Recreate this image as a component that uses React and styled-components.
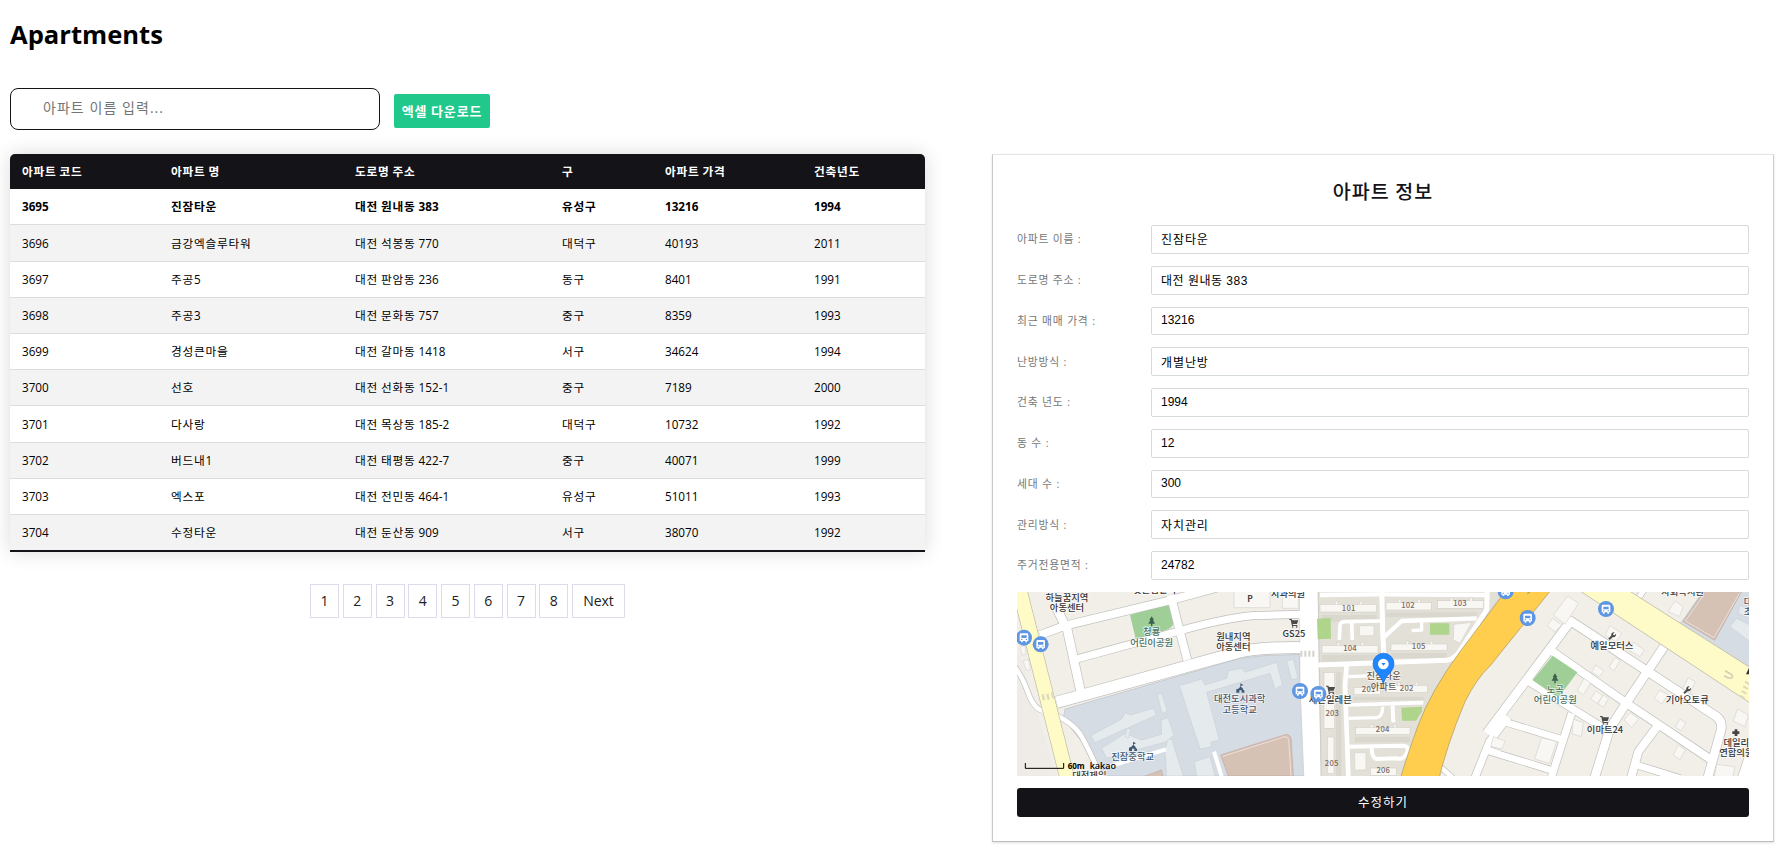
import React from "react";
import styled, { createGlobalStyle } from "styled-components";

const INK = "#141318";

const GlobalStyle = createGlobalStyle`
  * { box-sizing: border-box; }
  html, body { margin: 0; background: #fff; }
  body {
    font-family: "Open Sans", "Noto Sans CJK KR", sans-serif;
    color: #000;
    overflow: hidden;
  }
`;

const Page = styled.main`
  display: grid;
  grid-template-columns: 915px 782px;
  column-gap: 67px;
  padding: 0 0 16px 10px;
  width: 1790px;
  height: 859px;
  align-items: start;
  align-content: start;
`;

const Header = styled.header`
  grid-column: 1 / -1;
  height: 154px;
`;

const Title = styled.h1`
  margin: 0;
  padding-top: 17px;
  height: 88px;
  font-size: 25.6px;
  line-height: 36px;
  font-weight: 700;
`;

const Toolbar = styled.div`
  display: flex;
  align-items: flex-start;
  gap: 14px;
`;

const SearchInput = styled.input`
  width: 370px;
  height: 42px;
  padding: 0 32px 3px;
  border: 1px solid ${INK};
  border-radius: 8px;
  outline: none;
  font: 14px "Open Sans", "Noto Sans CJK KR", sans-serif;
  letter-spacing: 1.05px;
  &::placeholder { color: #757575; opacity: 1; }
`;

const ExcelButton = styled.button`
  margin-top: 6px;
  width: 96px;
  height: 34px;
  padding: 0 0 1px;
  border: 0;
  border-radius: 2px;
  background: #20c98b;
  color: #fff;
  font: 700 13px "Noto Sans CJK KR", sans-serif;
  letter-spacing: 0.8px;
  white-space: nowrap;
`;

const Table = styled.table`
  width: 915px;
  table-layout: fixed;
  border-collapse: separate;
  border-spacing: 0;
  border-radius: 5px 5px 0 0;
  overflow: hidden;
  box-shadow: 0 0 20px rgba(0, 0, 0, 0.15);
  font-size: 11.7px;
`;

const HeadRow = styled.tr`
  height: 35px;
  background: ${INK};
  color: #fff;
`;

const BodyRow = styled.tr`
  height: ${(p) => (p.$tall ? 37 : 36)}px;
  background: ${(p) => (p.$striped ? "#f3f3f3" : "#fff")};
  font-weight: ${(p) => (p.$active ? 700 : 400)};
  td { border-bottom: 1px solid #ddd; }
  &:last-of-type td { border-bottom: 2px solid ${INK}; }
`;

const Th = styled.th`
  padding: 0 0 1px 12px;
  width: ${(p) => p.$width}px;
  text-align: left;
  font-weight: 700;
  line-height: 16px;
  white-space: nowrap;
`;

const Td = styled.td`
  padding: 0 0 1px 12px;
  line-height: 16px;
  white-space: nowrap;
`;

const Hangul = styled.span`
  letter-spacing: 0.75px;
`;

const Pagination = styled.nav`
  display: flex;
  justify-content: center;
  gap: 3.75px;
  margin: 32px 0 0 0;
`;

const PageButton = styled.button`
  height: 34px;
  width: ${(p) => (p.$wide ? 53 : 29)}px;
  padding: 0 0 1px;
  border: 1px solid #dcdcec;
  background: #fff;
  color: #212121;
  font: 14px "Open Sans", sans-serif;
`;

const Card = styled.section`
  height: 688px;
  padding: 0 24px;
  border: 1px solid;
  border-color: #e4e4e4 #cdcdcd #bdbdbd #c8c8c8;
  box-shadow: 0 1px 2px rgba(0, 0, 0, 0.12);
`;

const CardTitle = styled.h2`
  margin: 0;
  height: 70px;
  padding-top: 22px;
  text-align: center;
  color: ${INK};
  font: 500 19.5px/27px "Noto Sans CJK KR", sans-serif;
  letter-spacing: 1.1px;
`;

const Field = styled.label`
  display: grid;
  grid-template-columns: 134px 1fr;
  align-items: center;
  height: 28.75px;
  margin-bottom: 12px;
`;

const FieldLabel = styled.span`
  color: #777;
  font-size: 10.8px;
  letter-spacing: 0.8px;
  line-height: 16px;
`;

const FieldInput = styled.input`
  width: 100%;
  height: 100%;
  padding: 0 9px 1px;
  border: 1px solid #d5dada;
  border-radius: 2px;
  outline: none;
  color: #000;
  font: 12px "Liberation Sans", "Noto Sans CJK KR", sans-serif;
  letter-spacing: ${(p) => p.$spacing}px;
`;

const MapView = styled.svg`
  display: block;
  width: 732px;
  height: 184px;
  overflow: hidden;
  font-family: "Noto Sans CJK KR", sans-serif;
`;

const SubmitButton = styled.button`
  display: block;
  width: 100%;
  height: 29px;
  margin-top: 12px;
  padding: 0 0 1px;
  border: 0;
  border-radius: 3px;
  background: ${INK};
  color: #fff;
  font: 12.5px "Noto Sans CJK KR", sans-serif;
  letter-spacing: 1px;
`;

const COLUMNS = [
  ["아파트 코드", 149],
  ["아파트 명", 184],
  ["도로명 주소", 207],
  ["구", 103],
  ["아파트 가격", 149],
  ["건축년도", 123],
];

const ROWS = [
  ["3695", "진잠타운", "대전 원내동 383", "유성구", "13216", "1994"],
  ["3696", "금강엑슬루타워", "대전 석봉동 770", "대덕구", "40193", "2011"],
  ["3697", "주공5", "대전 판암동 236", "동구", "8401", "1991"],
  ["3698", "주공3", "대전 문화동 757", "중구", "8359", "1993"],
  ["3699", "경성큰마을", "대전 갈마동 1418", "서구", "34624", "1994"],
  ["3700", "선호", "대전 선화동 152-1", "중구", "7189", "2000"],
  ["3701", "다사랑", "대전 목상동 185-2", "대덕구", "10732", "1992"],
  ["3702", "버드내1", "대전 태평동 422-7", "중구", "40071", "1999"],
  ["3703", "엑스포", "대전 전민동 464-1", "유성구", "51011", "1993"],
  ["3704", "수정타운", "대전 둔산동 909", "서구", "38070", "1992"],
];
const TALL_ROWS = [1, 6, 9];

const FIELDS = [
  ["아파트 이름 :", "진잠타운", 0.9],
  ["도로명 주소 :", "대전 원내동 383", 0.5],
  ["최근 매매 가격 :", "13216", 0],
  ["난방방식 :", "개별난방", 0.9],
  ["건축 년도 :", "1994", 0],
  ["동 수 :", "12", 0],
  ["세대 수 :", "300", 0],
  ["관리방식 :", "자치관리", 0.9],
  ["주거전용면적 :", "24782", 0],
];

/* Hangul runs are tracked a little wider than the digits beside them. */
function Mixed({ text }) {
  return text
    .split(/([가-힣]+)/)
    .filter(Boolean)
    .map((run, i) => (/[가-힣]/.test(run) ? <Hangul key={i}>{run}</Hangul> : run));
}

/* ---- map ---- */

const WHITE_ROADS = [
  ["M90 150L165 122L480 46L620 8", 24],
  ["M140 70L172 135L212 320", 26],
  ["M192 224L500 140Q640 100 730 92L870 88", 22],
  ["M482 30L502 110L532 225", 24],
  ["M140 352L690 200Q760 186 880 188", 34],
  ["M10 240Q35 270 55 325T110 378Q190 410 215 455T280 590", 14],
  ["M1430 445L1682 108L2120 395Q2140 410 2132 440L2090 590", 26],
  ["M1625 198L1850 355L2100 522", 24],
  ["M1962 185L1850 352L1800 430L1750 590", 26],
  ["M1552 287L1782 430", 22],
  ["M1465 405L1652 462", 20],
  ["M1685 385L1620 590", 22],
  ["M1430 496L1625 556", 20],
  ["M1945 420L1885 500L1860 590", 24],
  ["M1880 540L2010 580", 20],
  ["M1495 395L1438 470L1390 590", 22],
  ["M1885 40L1905 10", 16],
  ["M1425 490L1470 505", 16],
  ["M1285 540L1330 580", 14],
  ["M2225 500L2195 590", 30],
];

const LANES = [
  ["M925 240L1310 226Q1330 222 1345 205L1430 75L1432 10", 15],
  ["M1115 10L1118 135L1122 225", 15],
  ["M1118 160L1175 108L1400 100", 13],
  ["M988 165L990 120Q992 110 1005 110L1110 108", 11],
  ["M1027 165L1025 112", 11],
  ["M1235 108L1235 135L1205 137", 10],
  ["M930 30L1110 28L1430 30", 13],
  ["M1010 240L1005 300L1015 573", 14],
  ["M1015 275L1100 272", 10],
  ["M1012 360L1240 353", 11],
  ["M1015 400L1100 398Q1118 395 1118 365", 10],
  ["M1148 362L1150 412", 12],
  ["M1012 485L1180 482Q1200 484 1190 505T1160 520L1100 522Q1085 520 1085 487", 12],
];

const COMPLEX_BLOCKS = [
  [930, 58, 170, 23], [1128, 52, 136, 23], [1283, 47, 138, 23],
  [936, 181, 168, 23], [1143, 177, 168, 20],
  [1032, 307, 80, 22], [1130, 301, 122, 22], [1037, 427, 163, 22],
  [942, 262, 32, 168], [952, 456, 20, 110], [1081, 549, 78, 22],
];

const PALE_BUILDINGS = [
  "M1048 122L1092 122L1092 152L1048 152Z",
  "M1034 503L1068 503L1068 555L1034 555Z",
  "M1332 118L1385 112L1350 175L1330 165Z",
  "M672 10L780 10L780 68L672 68Z",
  "M817 10L865 10L865 70L817 70Z",
  "M1673 33L1706 55L1665 118L1630 90Z",
  "M1628 100L1655 120L1635 140L1612 122Z",
  "M1800 122L1836 145L1818 170L1785 150Z",
  "M1870 172L1903 195L1890 215L1855 195Z",
  "M1815 218L1830 226L1812 258L1797 246Z",
  "M1757 240L1782 258L1768 275L1745 262Z",
  "M1722 280L1742 294L1720 330L1702 316Z",
  "M1758 318L1778 332L1762 356L1742 342Z",
  "M1780 330L1796 340L1780 367L1764 355Z",
  "M1860 383L1886 402L1865 428L1842 405Z",
  "M2035 278L2056 290L2040 325L2018 310Z",
  "M1950 315L1974 330L1955 356L1932 340Z",
  "M2010 402L2028 414L2012 437L1996 426Z",
  "M2005 480L2026 495L2010 524L1990 510Z",
  "M1690 403L1720 412L1714 455L1686 446Z",
  "M1595 458L1640 470L1618 535L1574 522Z",
  "M1450 455L1486 468L1475 492L1442 484Z",
  "M2182 372L2215 390L2205 425L2170 408Z",
  "M2120 538L2175 545L2165 590L2110 590Z",
  "M1995 48L2020 65L2008 95L1975 80Z",
  "M30 185L45 182L48 208L36 210Z",
  "M40 228L55 222L62 255L48 256Z",
];

const SCHOOL_BUILDINGS = [
  "M242 452L335 402L345 383L362 390L430 370L440 390L255 473Z",
  "M442 330L455 325L472 378L456 386Z",
  "M275 490L345 445L395 465L455 448L453 405L474 398L492 450L470 470L340 505L290 520Z",
  "M350 430L362 432L355 460L346 455Z",
  "M508 302L575 282L585 300L650 280L655 258L695 250L705 262L790 235L800 232L818 300L795 312L780 265L590 322L628 465L602 472L605 485L570 492Z",
  "M830 228L850 222L864 280L845 284Z",
  "M465 500L472 465L485 462L500 510L520 573L470 573Z",
  "M553 530L600 515L615 573L560 573Z",
  "M2180 100L2220 120L2220 170L2160 125Z",
  "M2190 60L2220 75L2220 100L2185 85Z",
];

const PLACES = [
  ["하늘꿈지역", 171, 48, "dark"], ["아동센터", 171, 78, "dark"],
  ["맛손집갈비", 434, 26, "dark"],
  ["청룡", 425, 152, "park"], ["어린이공원", 425, 184, "park"],
  ["원내지역", 670, 166, "dark"], ["아동센터", 670, 196, "dark"],
  ["대전도시과학", 689, 353, "school"], ["고등학교", 689, 384, "school"],
  ["진잠중학교", 368, 525, "school"],
  ["대전제일", 238, 584, "dark"],
  ["치과의원", 834, 36, "dark"], ["GS25", 852, 156, "dark"],
  ["진잠타운", 1121, 282, "apt"], ["아파트", 1121, 315, "apt"],
  ["세븐일레븐", 961, 355, "dark"],
  ["사회복지관", 2018, 32, "dark"],
  ["예일모터스", 1806, 194, "dark"],
  ["노곡", 1636, 324, "park"], ["어린이공원", 1636, 355, "park"],
  ["이마트24", 1785, 445, "dark"], ["기아오토큐", 2032, 354, "dark"],
  ["데일리", 2179, 484, "dark"], ["연합의원", 2179, 515, "dark"],
  ["대전", 2227, 60, "school"], ["초등", 2227, 90, "school"],
];
const LABEL_COLORS = { dark: "#333", park: "#4b7160", school: "#3f5873", apt: "#66584f" };

const UNIT_NUMBERS = [
  ["101", 1016, 77], ["102", 1194, 70], ["103", 1350, 63], ["104", 1020, 197],
  ["105", 1226, 192], ["201", 1076, 321], ["202", 1190, 318], ["203", 967, 392],
  ["204", 1118, 442], ["205", 965, 543], ["206", 1120, 565],
];

function BusStop({ x, y }) {
  return (
    <g transform={`translate(${x} ${y})`}>
      <circle r="24" fill="#5f96e3" />
      <path
        d="M-9 -13H9Q13 -13 13 -9V10H9V14H4V10H-4V14H-9V10H-13V-9Q-13 -13 -9 -13ZM-8 -7V1H8V-7ZM-9 4V7H-5V4ZM5 4V7H9V4Z"
        fill="#fff"
        fillRule="evenodd"
      />
    </g>
  );
}

function Tree({ x, y }) {
  return (
    <path
      transform={`translate(${x} ${y})`}
      d="M0 -15L7 -4H4L10 7H2V15H-2V7H-10L-4 -4H-7Z"
      fill="#3f5f4d"
    />
  );
}

function School({ x, y }) {
  return (
    <path
      transform={`translate(${x} ${y})`}
      d="M0 -15L9 -10L2 -7V-5L8 1V4L12 6V13H4V6H-3V13H-12V3L-6 1L0 -5Z"
      fill="#3f5873"
    />
  );
}

function Cart({ x, y }) {
  return (
    <g transform={`translate(${x} ${y})`} fill="#4a4a4a">
      <path d="M-14 -12H-7L-5 -8H13L9 3H-4L-3 6H10V9H-6L-10 -9H-14Z" />
      <circle cx="-4" cy="12" r="2.5" />
      <circle cx="8" cy="12" r="2.5" />
    </g>
  );
}

function Wrench({ x, y }) {
  return (
    <path
      transform={`translate(${x} ${y}) rotate(45)`}
      d="M-3 -13V-6L0 -4L3 -6V-13Q8 -9 7 -3L3 2V14H-3V2L-7 -3Q-8 -9 -3 -13Z"
      fill="#4a4a4a"
    />
  );
}

function ApartmentMap() {
  return (
    <MapView viewBox="21 21 2196 552" preserveAspectRatio="none" role="img" aria-label="kakao map">
      <rect x="21" y="21" width="2196" height="552" fill="#f2efe9" />
      <path d="M21 180L140 573H21Z" fill="#ece9e3" opacity="0.4" />
      <path
        d="M165 372L690 220L760 212L868 208L884 573H265L215 470L160 400Z"
        fill="#d5dce3"
        stroke="#b8bfc6"
        strokeWidth="2"
      />
      {SCHOOL_BUILDINGS.slice(0, 8).map((d) => (
        <path key={d} d={d} fill="#e5eaed" stroke="#c4cbd1" strokeWidth="1.5" />
      ))}
      <path d="M632 510L826 449Q838 446 843 460L850 573H655Z" fill="#d6c1b5" stroke="#c3a9a0" strokeWidth="2" />
      <path d="M638 514L824 455Q832 453 836 464L843 573" fill="none" stroke="#fff" strokeWidth="1.5" />
      <path d="M360 590L455 555L462 590Z" fill="#d6c1b5" stroke="#c3a9a0" strokeWidth="2" />
      <path d="M612 500L640 590M295 545L468 493" stroke="#fff" strokeWidth="12" fill="none" />
      <path d="M360 90L470 57Q482 56 484 70L490 115Q488 128 470 134L378 165Z" fill="#9fcf97" />

      {WHITE_ROADS.map(([d, w]) => (
        <path key={d} d={d} fill="none" stroke="#bfbfbd" strokeWidth={w + 4} strokeLinejoin="round" />
      ))}
      {WHITE_ROADS.map(([d, w]) => (
        <path key={d} d={d} fill="none" stroke="#fff" strokeWidth={w} strokeLinejoin="round" />
      ))}
      <path d="M20 -20L185 632" stroke="#bdbba8" strokeWidth="46" />
      <path d="M20 -20L185 632" stroke="#fffbc6" strokeWidth="42" />
      <path d="M98 328L102 346M112 326L116 344M126 322L130 340" stroke="#ddd9bd" strokeWidth="7" />
      <path d="M868 10H925L928 300L934 590H882L870 300Z" fill="#fff" stroke="#c9c9c6" strokeWidth="2" />
      <path d="M866 77H876V101H866ZM866 173H876V204H866Z" fill="#fff" />
      <path d="M874 197V215M886 197V215M898 197V215M910 197V215" stroke="#d4d2cd" strokeWidth="6" />

      <path
        d="M924 10L1490 10L1350 200Q1262 320 1225 420L1175 590H934L928 240Z"
        fill="#e3e0d8"
        stroke="#c6c3bb"
        strokeWidth="2"
      />
      <path
        d="M935 90H1100V110H935ZM1128 82H1400V96H1128ZM935 210H1105V230H935ZM1145 204H1310V220H1145ZM1030 335H1240V346H1030ZM1035 455H1200V472H1035ZM978 262H994V573H978Z"
        fill="#dad7ce"
      />
      {LANES.map(([d, w]) => (
        <path key={d} d={d} fill="none" stroke="#fff" strokeWidth={w} strokeLinejoin="round" />
      ))}
      {COMPLEX_BLOCKS.map(([x, y, w, h]) => (
        <g key={`${x}-${y}`} fill="#f8f7f3" stroke="#cbc8c0" strokeWidth="1.5">
          <rect x={x} y={y} width={w} height={h} />
          {w > 100 && <path d={`M${x + w * 0.27} ${y}v-9h8v9M${x + w * 0.7} ${y}v-9h8v9`} />}
        </g>
      ))}
      <path
        d="M921 101L962 99L963 161L923 163ZM1260 115H1318V149H1260ZM1174 368L1236 365V378L1218 407H1176Z"
        fill="#afd48c"
      />
      <path
        d="M1510 -12L1350 200Q1262 320 1225 420Q1195 500 1165 600H1282Q1310 480 1365 350Q1400 280 1440 243L1640 -6Z"
        fill="#ffce4f"
        stroke="#b7a36e"
        strokeWidth="2.5"
      />
      <path d="M1552 26L1560 20" stroke="#b7a36e" strokeWidth="4" />
      <path d="M2085 10L2230 10V255L2010 118Z" fill="#d5dce3" stroke="#b8bfc6" strokeWidth="2" />
      {SCHOOL_BUILDINGS.slice(8).map((d) => (
        <path key={d} d={d} fill="#e5eaed" stroke="#c4cbd1" strokeWidth="1.5" />
      ))}
      <path d="M2088 10L2200 10L2114 166L2020 110Z" fill="#d6c1b5" stroke="#c3a9a0" strokeWidth="2" />
      <path d="M2082 28L2026 108L2112 158L2190 22" fill="none" stroke="#fff" strokeWidth="1.5" />
      <path d="M1680 -2L1830 0L2240 260V367Z" fill="#fffbc9" stroke="#bdbba8" strokeWidth="2.5" />
      <path d="M2145 257L2158 265Q2172 272 2166 278Q2160 283 2142 272" fill="none" stroke="#d3cfb0" strokeWidth="5" />
      <path d="M2205 290L2218 298M2200 304L2214 312M2195 318L2209 326M2190 332L2204 340" stroke="#ddd9bd" strokeWidth="6" />
      <path d="M1628 212L1702 262L1655 325Q1645 338 1632 330L1568 286Z" fill="#9fcf97" />
      {PALE_BUILDINGS.map((d) => (
        <path key={d} d={d} fill="#f8f7f4" stroke="#d6d3cd" strokeWidth="2" />
      ))}

      <Tree x={425} y={109} />
      <Tree x={1635} y={280} />
      <School x={369} y={485} />
      <School x={691} y={310} />
      <Cart x={852} y={114} />
      <Cart x={962} y={314} />
      <Cart x={1784} y={405} />
      <Wrench x={1807} y={153} />
      <Wrench x={2032} y={315} />
      <path d="M2174 433H2182V439H2188V447H2182V453H2174V447H2167V439H2174Z" fill="#444" />
      <path d="M2208 268L2217 248V268Z" fill="#333" />

      {UNIT_NUMBERS.map(([n, x, y]) => (
        <text key={n} x={x} y={y} fontSize="23" letterSpacing="0.5" fontWeight="500" textAnchor="middle" fill="#7a6a62">
          {n}
        </text>
      ))}
      {PLACES.map(([name, x, y, tone]) => (
        <text
          key={`${name}-${x}-${y}`}
          x={x}
          y={y - 1}
          fontSize="28"
          fontWeight="500"
          textAnchor="middle"
          fill={LABEL_COLORS[tone]}
          stroke="#fff"
          strokeWidth="4"
          strokeOpacity="0.75"
          paintOrder="stroke"
        >
          {name}
        </text>
      ))}
      <text x="720" y="51" fontSize="25" fontWeight="700" textAnchor="middle" fill="#444">P</text>

      <BusStop x={42} y={158} />
      <BusStop x={92} y={178} />
      <BusStop x={870} y={318} />
      <BusStop x={925} y={327} />
      <BusStop x={1487} y={19} />
      <BusStop x={1553} y={99} />
      <BusStop x={1788} y={72} />

      <path
        d="M1120 298C1116 270 1089 262 1089 236A31.500 31.500 0 0 1 1152 236C1152 262 1124 270 1120 298Z"
        fill="#1f86ff"
        stroke="#1069d8"
        strokeWidth="2"
      />
      <circle cx="1120" cy="237" r="16" fill="#fff" />
      <path d="M1114 234H1127L1120.500 242Z" fill="#1f86ff" />

      <path d="M46 534V550H161V534" fill="none" stroke="#000" strokeWidth="3" />
      <text x="173" y="551" fontFamily="Open Sans" fontSize="24" fontWeight="700" fill="#000">60m</text>
      <text x="239" y="551" fontFamily="Open Sans" fontSize="27" fontWeight="600" fill="#000">kakao</text>
    </MapView>
  );
}

export default function App() {
  return (
    <>
      <GlobalStyle />
      <Page>
        <Header>
          <Title>Apartments</Title>
          <Toolbar>
            <SearchInput placeholder="아파트 이름 입력..." />
            <ExcelButton>엑셀 다운로드</ExcelButton>
          </Toolbar>
        </Header>

        <section>
          <Table>
            <thead>
              <HeadRow>
                {COLUMNS.map(([name, width]) => (
                  <Th key={name} $width={width}><Mixed text={name} /></Th>
                ))}
              </HeadRow>
            </thead>
            <tbody>
              {ROWS.map((row, i) => (
                <BodyRow key={row[0]} $active={i === 0} $striped={i % 2 === 1} $tall={TALL_ROWS.includes(i)}>
                  {row.map((cell, j) => (
                    <Td key={j}><Mixed text={cell} /></Td>
                  ))}
                </BodyRow>
              ))}
            </tbody>
          </Table>
          <Pagination>
            {[1, 2, 3, 4, 5, 6, 7, 8].map((n) => (
              <PageButton key={n}>{n}</PageButton>
            ))}
            <PageButton $wide>Next</PageButton>
          </Pagination>
        </section>

        <Card>
          <CardTitle>아파트 정보</CardTitle>
          {FIELDS.map(([label, value, spacing]) => (
            <Field key={label}>
              <FieldLabel>{label}</FieldLabel>
              <FieldInput defaultValue={value} $spacing={spacing} />
            </Field>
          ))}
          <ApartmentMap />
          <SubmitButton>수정하기</SubmitButton>
        </Card>
      </Page>
    </>
  );
}
